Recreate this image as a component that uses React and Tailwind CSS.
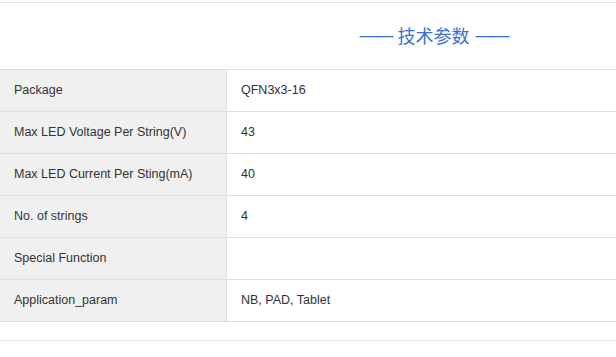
const rows = [
  ['Package', 'QFN3x3-16'],
  ['Max LED Voltage Per String(V)', '43'],
  ['Max LED Current Per Sting(mA)', '40'],
  ['No. of strings', '4'],
  ['Special Function', ''],
  ['Application_param', 'NB, PAD, Tablet'],
]

export default function App() {
  return (
    <div className="w-[616px] h-[357px] bg-white pt-[2px] font-['Liberation_Sans',Arial,sans-serif] text-[12.5px] text-[#333]">
      {/* title */}
      <div className="border-t border-[#e3e3e3] h-[67px] flex items-center justify-center pl-[251px] pb-[1px]">
        <span className="text-[18px] text-[#3b6fd6] flex items-center gap-[6px]">
          <span className="font-['Liberation_Sans',sans-serif] tracking-[-2px]">——</span>
          <span className="font-['Noto_Sans_CJK_SC',sans-serif]">技术参数</span>
          <span className="font-['Liberation_Sans',sans-serif] tracking-[-2px]">——</span>
        </span>
      </div>

      {/* params table */}
      <div className="border-t border-[#dedede]">
        {rows.map(([k, v]) => (
          <div key={k} className="flex h-[42px] border-b border-[#dedede]">
            <div className="w-[227px] bg-[#f0f0f0] border-r border-[#dedede] flex items-center pl-[14px] pb-[1px]">
              {k}
            </div>
            <div className="flex-1 flex items-center pl-[14px] pb-[1px]">{v}</div>
          </div>
        ))}
      </div>

      <div className="mt-[18px] border-t border-[#e3e3e3]"></div>
    </div>
  )
}
